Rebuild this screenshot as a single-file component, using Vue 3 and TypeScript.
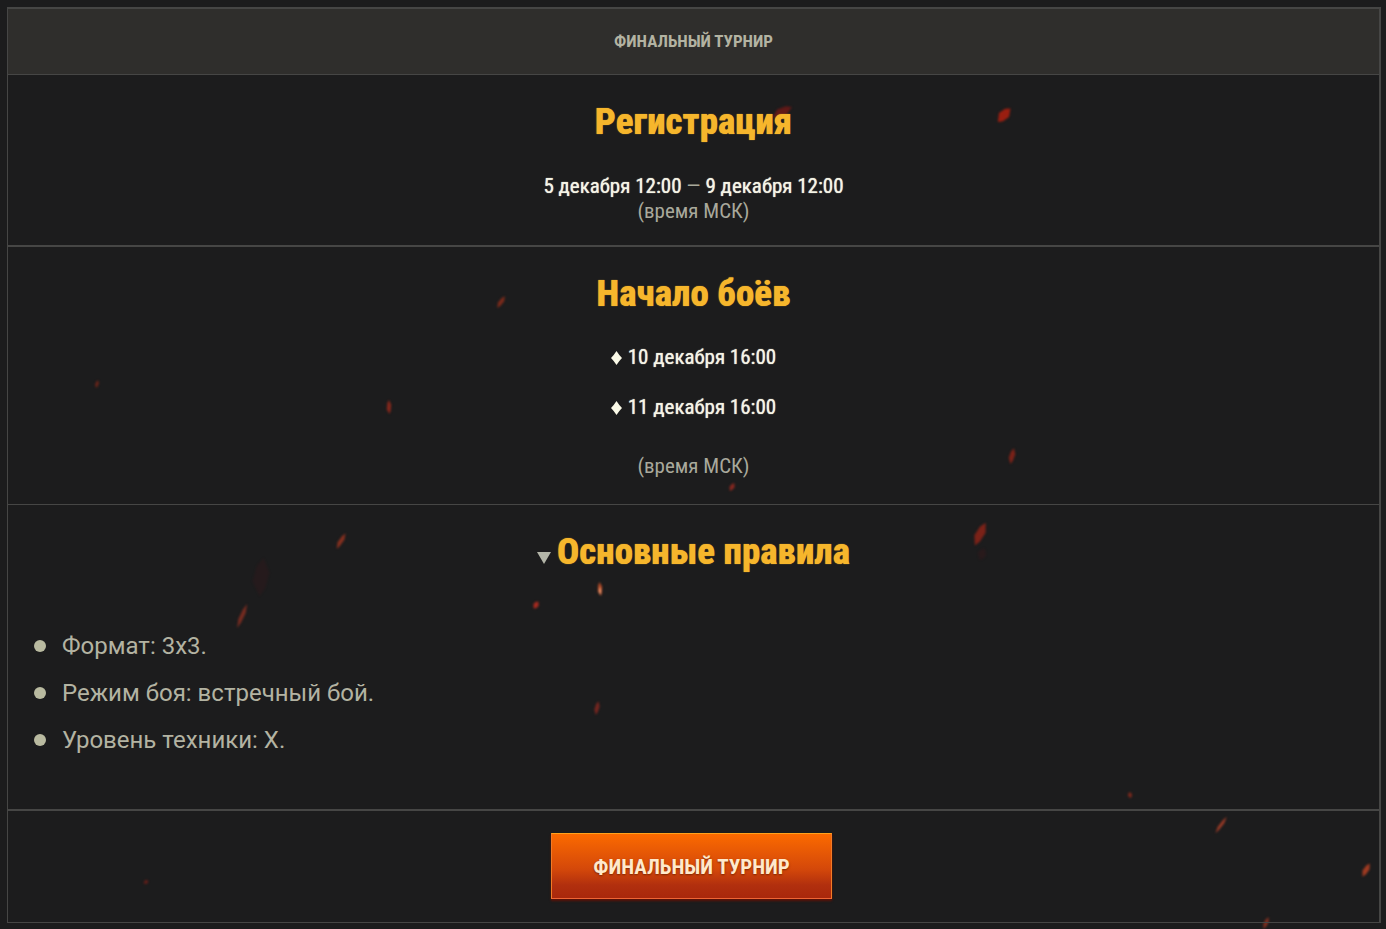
<script setup lang="ts">
interface Ember {
  x: number
  y: number
  length: number
  width: number
  angle: number
  color: string
  opacity: number
}

const startDates: string[] = ['10 декабря 16:00', '11 декабря 16:00']

const rules: string[] = [
  'Формат: 3х3.',
  'Режим боя: встречный бой.',
  'Уровень техники: X.',
]

const embers: Ember[] = [
  { x: 1004, y: 115, length: 18, width: 9, angle: -35, color: '#a81f10', opacity: 0.9 },
  { x: 782, y: 112, length: 22, width: 8, angle: -20, color: '#8e1714', opacity: 0.6 },
  { x: 501, y: 302, length: 14, width: 4, angle: -50, color: '#a3301a', opacity: 0.7 },
  { x: 97, y: 384, length: 8, width: 3, angle: -65, color: '#8c2818', opacity: 0.7 },
  { x: 389, y: 407, length: 14, width: 4, angle: -85, color: '#a02a1b', opacity: 0.8 },
  { x: 1012, y: 456, length: 16, width: 5, angle: -70, color: '#8c2318', opacity: 0.85 },
  { x: 732, y: 487, length: 9, width: 4, angle: -50, color: '#a12b20', opacity: 0.8 },
  { x: 341, y: 541, length: 18, width: 4, angle: -55, color: '#a0351f', opacity: 0.8 },
  { x: 980, y: 534, length: 25, width: 8, angle: -57, color: '#8c2318', opacity: 0.85 },
  { x: 982, y: 554, length: 12, width: 8, angle: -50, color: '#4a1518', opacity: 0.25 },
  { x: 261, y: 577, length: 38, width: 14, angle: -75, color: '#4a1518', opacity: 0.2 },
  { x: 242, y: 616, length: 26, width: 4, angle: -64, color: '#8c3022', opacity: 0.8 },
  { x: 600, y: 589, length: 14, width: 4, angle: -88, color: '#d4552a', opacity: 0.8 },
  { x: 600, y: 591, length: 8, width: 2, angle: -88, color: '#ffb184', opacity: 0.8 },
  { x: 536, y: 605, length: 8, width: 5, angle: -40, color: '#b42b20', opacity: 0.9 },
  { x: 597, y: 708, length: 14, width: 4, angle: -72, color: '#8c2820', opacity: 0.8 },
  { x: 1130, y: 795, length: 6, width: 4, angle: -75, color: '#8e2c1d', opacity: 0.8 },
  { x: 1221, y: 825, length: 20, width: 3, angle: -52, color: '#b04028', opacity: 0.85 },
  { x: 1366, y: 870, length: 15, width: 5, angle: -53, color: '#b64022', opacity: 0.85 },
  { x: 1266, y: 923, length: 13, width: 4, angle: -60, color: '#9c3420', opacity: 0.75 },
  { x: 146, y: 882, length: 5, width: 4, angle: 0, color: '#7c1f18', opacity: 0.7 },
]

function emberPath(e: Ember): string {
  const l = e.length / 2
  const w = e.width / 2
  return `M${-l} ${w / 2}L${-l / 3} ${-w}L${l / 2} ${-w}L${l} ${-w / 3}L${l / 3} ${w}L${-l / 2} ${w}Z`
}
</script>

<template>
  <main class="page">
    <svg class="embers" viewBox="0 0 1386 929" preserveAspectRatio="xMidYMin slice" aria-hidden="true">
      <path
        v-for="(e, i) in embers"
        :key="i"
        :d="emberPath(e)"
        :fill="e.color"
        :fill-opacity="e.opacity"
        :transform="`translate(${e.x} ${e.y}) rotate(${e.angle})`"
      />
    </svg>

    <div class="card">
      <header class="card-head">Финальный турнир</header>

      <section class="block">
        <h2 class="title">Регистрация</h2>
        <p class="dates">
          <strong>5 декабря 12:00</strong> — <strong>9 декабря 12:00</strong><br />(время МСК)
        </p>
      </section>

      <section class="block thick">
        <h2 class="title">Начало боёв</h2>
        <ul class="starts">
          <li v-for="date in startDates" :key="date">
            <svg class="diamond" viewBox="0 0 11 14" aria-hidden="true">
              <path d="M5.5 0Q8 4 11 7Q8 10 5.5 14Q3 10 0 7Q3 4 5.5 0Z" />
            </svg>
            <strong>{{ date }}</strong>
          </li>
        </ul>
        <p class="zone">(время МСК)</p>
      </section>

      <section class="block">
        <details open>
          <summary>
            <svg class="arrow" viewBox="0 0 14 12" aria-hidden="true"><path d="M0 0H14L7 12Z" /></svg>
            <h2 class="title">Основные правила</h2>
          </summary>
          <ul class="rule-list">
            <li v-for="rule in rules" :key="rule">{{ rule }}</li>
          </ul>
        </details>
      </section>

      <footer class="block thick action">
        <button type="button" class="button">Финальный турнир</button>
      </footer>
    </div>
  </main>
</template>

<style>
body {
  margin: 0;
  background: #1c1c1d;
}
</style>

<style scoped>
.page {
  position: relative;
  box-sizing: border-box;
  min-height: 100vh;
  padding: 7px 5px 6px 7px;
  overflow: hidden;
  background: #1c1c1d;
  color: #a9a99c;
  font-family: "Roboto Condensed", "Liberation Sans Narrow", Roboto, sans-serif;
  font-size: 21px;
  line-height: 25px;
}

.embers {
  position: absolute;
  inset: 0;
  width: 100%;
  height: 100%;
  filter: blur(1px);
  pointer-events: none;
}

.card {
  position: relative;
  border: solid #464645;
  border-width: 2px 2px 1px 1px;
}

.card-head {
  padding: 20px 24px;
  background: #2f2e2c;
  color: #b3b3a2;
  font-size: 17px;
  font-weight: 700;
  text-align: center;
  text-transform: uppercase;
}

.block {
  padding: 24px 24px 21px;
  border-top: 1px solid #464645;
  text-align: center;
}

.thick {
  border-top-width: 2px;
  padding-bottom: 25px;
}

.title {
  margin: 0;
  color: #f6b62c;
  font-size: 37px;
  font-weight: 800;
  line-height: 46px;
  text-shadow: 0 0 1px #f6b62c;
}

.dates,
.zone {
  margin: 0;
}

.dates {
  padding-top: 29px;
}

strong {
  color: #f5f4e6;
  font-weight: 450;
  text-shadow: 0 0 1px #f5f4e6;
}

.starts {
  display: grid;
  gap: 25px;
  margin: 0;
  padding: 28px 0 34px;
  list-style: none;
}

.starts li {
  display: flex;
  align-items: center;
  justify-content: center;
  gap: 6px;
}

.diamond {
  width: 11px;
  height: 14px;
  fill: #fbfae8;
}

.arrow {
  width: 14px;
  height: 12px;
  margin-top: 12px;
  fill: #b3b5a8;
}

summary {
  display: flex;
  align-items: center;
  justify-content: center;
  gap: 6px;
  list-style: none;
  cursor: pointer;
}

.rule-list {
  display: grid;
  gap: 15px;
  margin: 0;
  padding: 55px 0 32px;
  list-style: none;
  color: #b3b3a2;
  font-family: Roboto, sans-serif;
  font-size: 24px;
  line-height: 32px;
  text-align: left;
}

.rule-list li {
  display: flex;
  align-items: center;
  gap: 16px;
}

.rule-list li::before {
  content: "";
  width: 12px;
  height: 12px;
  margin-left: 2px;
  border-radius: 50%;
  background: #b9baa0;
}

.action {
  padding: 22px 28px 23px 24px;
}

.button {
  display: block;
  min-width: 281px;
  margin: 0 auto;
  padding: 21px 40px 18px;
  border: 1px solid;
  border-color: #ffa21c #f37a25 #ef6534;
  background: linear-gradient(#fb6a00, #d4480a 55%, #b12f0e 80%, #a9280c);
  box-shadow: 0 2px 2px #5c1207;
  color: #ffe9cb;
  font: inherit;
  font-weight: 700;
  text-shadow: 0 1px 2px #7a2400;
  text-transform: uppercase;
  cursor: pointer;
}
</style>
